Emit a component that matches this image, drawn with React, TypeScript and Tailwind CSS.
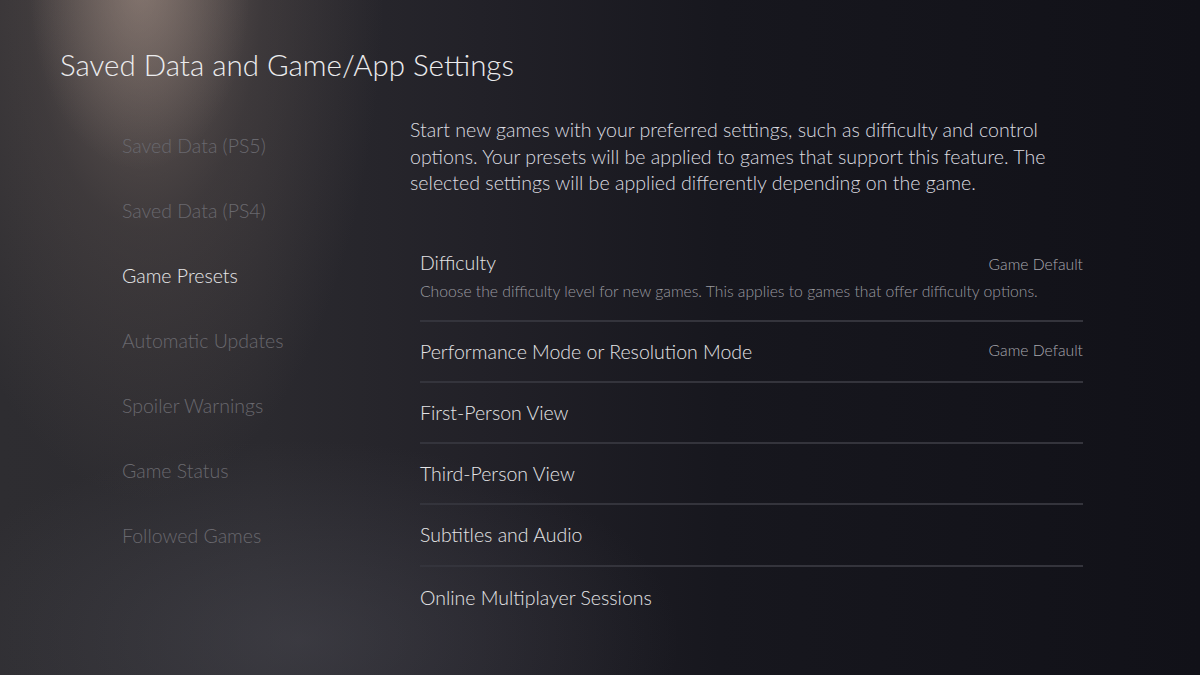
const menu = [
  { label: 'Saved Data (PS5)', active: false },
  { label: 'Saved Data (PS4)', active: false },
  { label: 'Game Presets', active: true },
  { label: 'Automatic Updates', active: false },
  { label: 'Spoiler Warnings', active: false },
  { label: 'Game Status', active: false },
  { label: 'Followed Games', active: false },
];

const rows = [
  { label: 'Performance Mode or Resolution Mode', value: 'Game Default' },
  { label: 'First-Person View' },
  { label: 'Third-Person View' },
  { label: 'Subtitles and Audio' },
  { label: 'Online Multiplayer Sessions' },
];

export default function App() {
  return (
    <div className="relative w-[1200px] h-[675px] overflow-hidden font-['Lato','Open_Sans',sans-serif] bg-[#111118]">
      {/* background lighting */}
      <div className="absolute inset-0 bg-[linear-gradient(90deg,#2e2d31_0%,#2b2a2f_22%,#222128_40%,#17171e_60%,#111118_100%)]" />
      <div className="absolute inset-0 bg-[radial-gradient(ellipse_380px_200px_at_300px_640px,rgba(90,90,100,0.35),rgba(90,90,100,0)_100%)]" />
      <div className="absolute inset-0 bg-[radial-gradient(ellipse_240px_540px_at_145px_-40px,rgba(145,126,116,0.62),rgba(115,100,94,0.25)_50%,rgba(80,70,70,0)_100%)]" />
      <div className="absolute inset-0 bg-[radial-gradient(ellipse_110px_180px_at_140px_-10px,rgba(175,155,145,0.38),rgba(175,155,145,0)_100%)]" />

      <div className="relative flex flex-col">
        <h1 className="pl-[60px] pt-[45px] text-[29.5px] leading-[40px] font-light text-[#ececee]">
          Saved Data and Game/App Settings
        </h1>

        <div className="flex mt-[31px]">
          <ul className="w-[410px] pl-[122px] flex flex-col pt-[8px]">
            {menu.map((m) => (
              <li
                key={m.label}
                className={`h-[65px] leading-[44px] text-[19.5px] font-light ${
                  m.active ? 'text-[#e6e6e8]' : 'text-[#69686e]'
                }`}
              >
                {m.label}
              </li>
            ))}
          </ul>

          <div className="w-[673px] flex flex-col pt-[1px]">
            <p className="w-[645px] text-[19.6px] leading-[26.5px] font-light text-[#dcdce0]">
              Start new games with your preferred settings, such as difficulty and control options. Your presets will be applied to games that support this feature. The selected settings will be applied differently depending on the game.
            </p>

            <div className="ml-[10px] mt-[35px] flex flex-col">
              <div className="h-[90px] border-b-2 border-[#34343c] flex flex-col pt-[18px]">
                <div className="flex justify-between items-baseline">
                  <span className="text-[19.5px] leading-[26px] font-light text-[#e4e4e6]">Difficulty</span>
                  <span className="text-[15.7px] font-light text-[#a8a8ae]">Game Default</span>
                </div>
                <span className="mt-[5px] text-[15.7px] leading-[20px] font-light text-[#9a9aa0]">
                  Choose the difficulty level for new games. This applies to games that offer difficulty options.
                </span>
              </div>
              {rows.map((r, i) => (
                <div
                  key={r.label}
                  className={`h-[61.3px] flex items-center justify-between ${
                    i < rows.length - 1 ? 'border-b-2 border-[#34343c]' : ''
                  }`}
                >
                  <span className="text-[19.5px] font-light text-[#e4e4e6]">{r.label}</span>
                  {r.value && <span className="text-[15.7px] font-light text-[#a8a8ae]">{r.value}</span>}
                </div>
              ))}
            </div>
          </div>
        </div>
      </div>
    </div>
  );
}
